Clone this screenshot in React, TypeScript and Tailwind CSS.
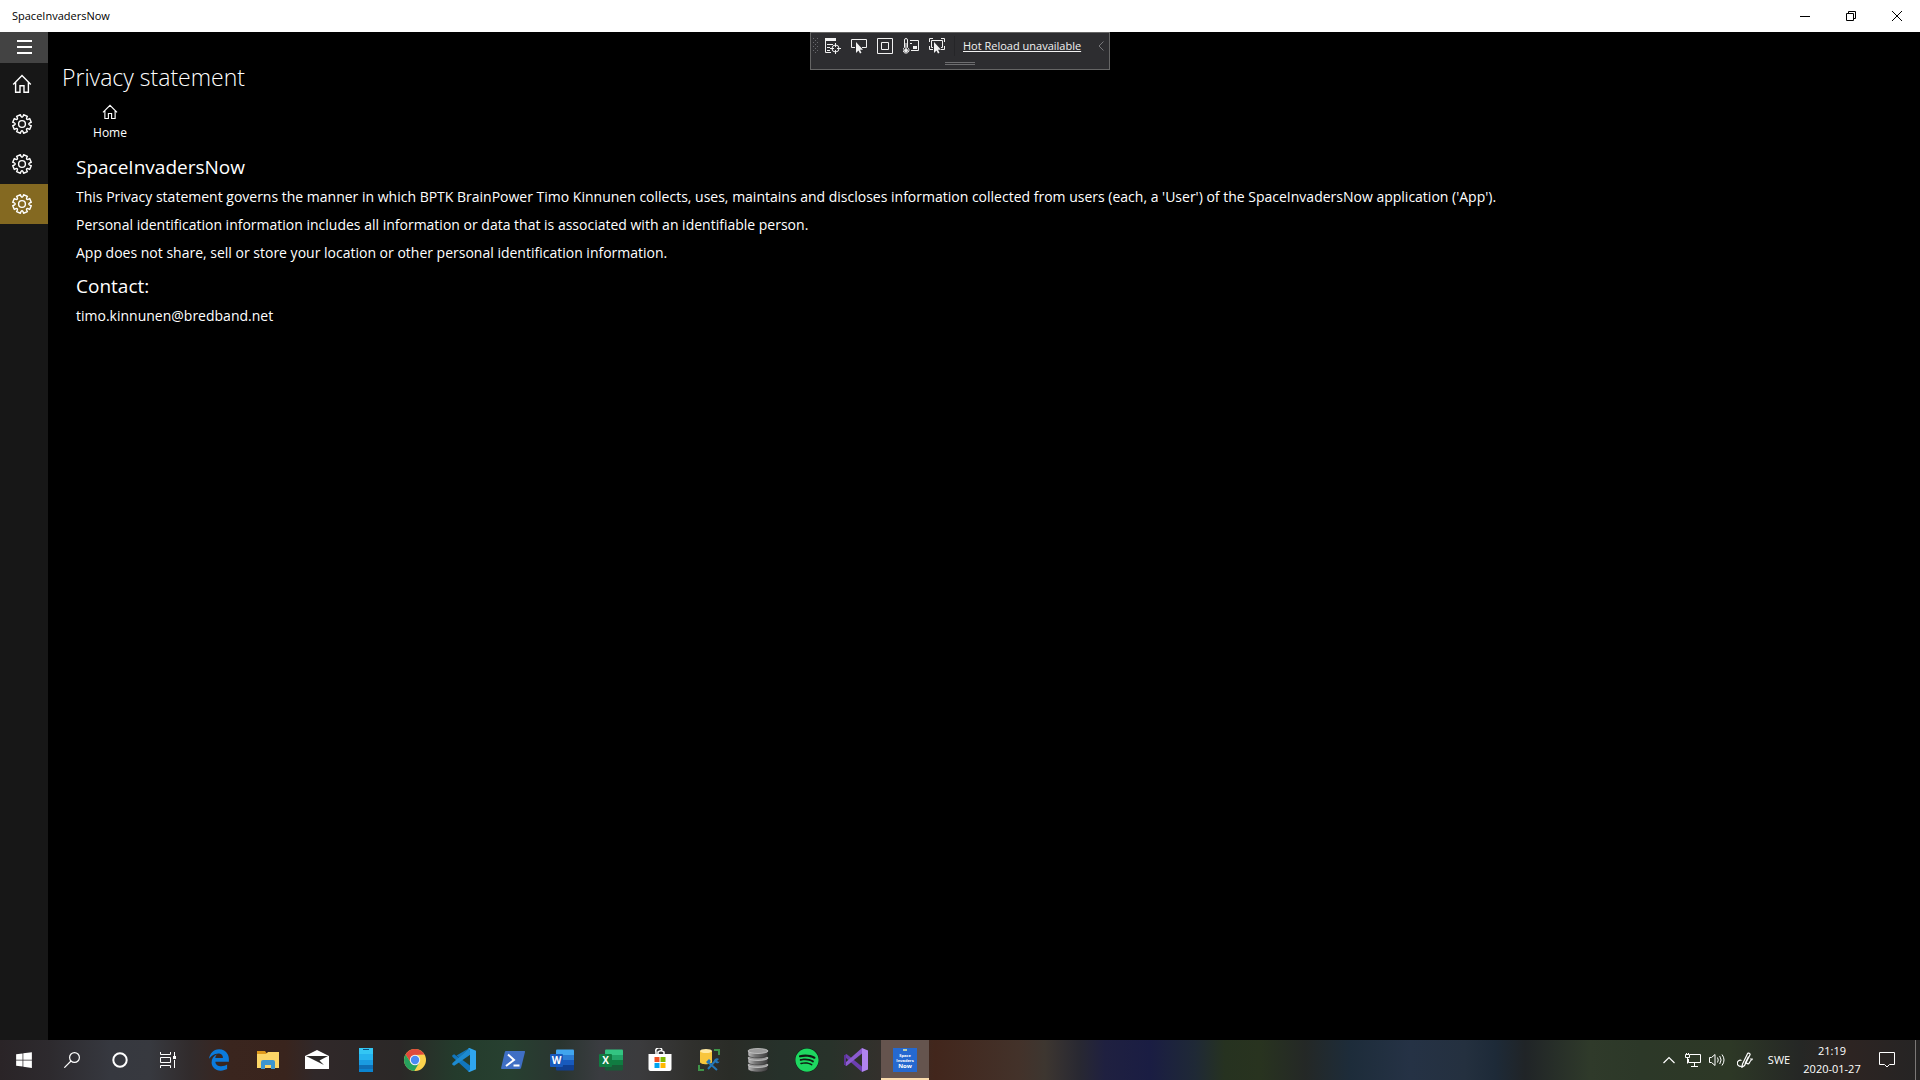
import type { ReactNode } from "react";
import { FaWindows, FaEdgeLegacy, FaSpotify } from "react-icons/fa6";

const line = { fill: "none", stroke: "currentColor" } as const;

function HomeIcon({ className }: { className: string }) {
  return (
    <svg viewBox="0 0 20 20" className={className} {...line} strokeWidth="1.4" aria-hidden="true">
      <path d="M1.2 10.4 10 1.6l8.800 8.800M3.600 8.400v9.800h4.400v-6.400h4v6.400h4.400V8.400" />
    </svg>
  );
}

function gearPath() {
  const pts: string[] = [];
  for (let i = 0; i < 8; i++) {
    const base = (i * Math.PI) / 4 + Math.PI / 8;
    const at = (r: number, o: number) =>
      `${(10 + r * Math.cos(base + o)).toFixed(2)} ${(10 + r * Math.sin(base + o)).toFixed(2)}`;
    pts.push(`${i ? "L" : "M"}${at(9.4, -0.22)}L${at(9.4, 0.22)}L${at(7.6, 0.26)}Q${at(6, 0.39)} ${at(7.6, 0.53)}`);
  }
  return pts.join("") + "Z";
}

function GearIcon() {
  return (
    <svg viewBox="0 0 20 20" className="size-5" {...line} strokeWidth="1.4" strokeLinejoin="round" aria-hidden="true">
      <path d={gearPath()} />
      <circle cx="10" cy="10" r="3.400" />
    </svg>
  );
}

function Svg({ children }: { children: ReactNode }) {
  return (
    <svg viewBox="0 0 24 24" className="size-6" aria-hidden="true">
      {children}
    </svg>
  );
}

function OfficeIcon({ letter, colors }: { letter: string; colors: string[] }) {
  return (
    <Svg>
      <path d="M6 2.500a1 1 0 0 1 1-1h16a1 1 0 0 1 1 1V7H6z" fill={colors[0]} />
      <path d="M6 7h18v5H6z" fill={colors[1]} />
      <path d="M6 12h18v5H6z" fill={colors[2]} />
      <path d="M6 17h18v4.500a1 1 0 0 1-1 1H7a1 1 0 0 1-1-1z" fill={colors[3]} />
      <rect x="0" y="6" width="13" height="13" rx="1" fill={colors[4]} />
      <text x="6.500" y="16" textAnchor="middle" fontSize="10" fontWeight="700" fill="#fff">
        {letter}
      </text>
    </Svg>
  );
}

const apps: { name: string; icon: ReactNode; active?: boolean }[] = [
  { name: "Microsoft Edge", icon: <FaEdgeLegacy className="size-[22px] text-[#0b7bdc]" /> },
  {
    name: "File Explorer",
    icon: (
      <Svg>
        <path d="M1 3h8l1.500 2H22v4H1z" fill="#e09a1c" />
        <path d="M1 6h9l2-2h11v16H1z" fill="#fdd667" />
        <path d="M5 21v-7a2 2 0 0 1 2-2h10a2 2 0 0 1 2 2v7h-4v-4H9v4z" fill="#3d95cf" />
      </Svg>
    ),
  },
  {
    name: "Mail",
    icon: (
      <Svg>
        <path d="M0 8 12 2l12 6v13H0z" fill="#fff" />
        <path d="M1 8h22l-8.500 4.500 4.500 4.500z" fill="#2b2827" />
      </Svg>
    ),
  },
  {
    name: "Your Phone",
    icon: (
      <Svg>
        <path d="M5 0h14v6H5z" fill="#33c6f4" />
        <path d="M5 6h14v6H5z" fill="#25b3ee" />
        <path d="M5 12h14v5H5z" fill="#1a9be0" />
        <path d="M5 17h14v4H5z" fill="#0f6fb5" />
        <path d="M5 21h14v3H5z" fill="#0b84d0" />
        <path d="M9 1h6v1H9z" fill="#0b4f80" />
      </Svg>
    ),
  },
  {
    name: "Google Chrome",
    icon: (
      <Svg>
        <circle cx="12" cy="12" r="11" fill="#fbd34d" />
        <path d="M2.500 6.500A11 11 0 0 1 21.500 6.500L12 7 7.700 14.500z" fill="#df4a3c" />
        <path d="M2.500 6.500A11 11 0 0 0 11.300 23l5-8.500-8.600 0z" fill="#27a15d" />
        <circle cx="12" cy="12" r="5.200" fill="#f4f4f4" />
        <circle cx="12" cy="12" r="4.200" fill="#4a8af4" />
      </Svg>
    ),
  },
  {
    name: "Visual Studio Code",
    icon: (
      <Svg>
        <path d="M17.500 0 6.800 9.800 2.200 6.300.3 7.300v1.500l16.200 14.700 1.500-.5v-5.600L4.500 7.500z" fill="#1176bd" />
        <path d="M.3 15.200 17.500 0l1 6.500L2.200 17.700.3 16.700z" fill="#1d8ad0" />
        <path d="M17.500 0 24 2.800v18.400L17.500 24l-1.500-.8 2-1.200V2L16 .8z" fill="#2fa5ee" />
      </Svg>
    ),
  },
  {
    name: "Windows PowerShell",
    icon: (
      <Svg>
        <path d="M5 3h18.200a.8.800 0 0 1 .8 1l-4 16a1.500 1.500 0 0 1-1.300 1H.9a.8.800 0 0 1-.8-1l3.700-16A1.500 1.500 0 0 1 5 3z" fill="#3f6fc4" />
        <path d="M7 6.500 13 12l-8 6M12.500 17.500h6" fill="none" stroke="#fff" strokeWidth="2" />
      </Svg>
    ),
  },
  { name: "Word", icon: <OfficeIcon letter="W" colors={["#41a5ee", "#2b7cd3", "#185abd", "#103f91", "#185abd"]} /> },
  { name: "Excel", icon: <OfficeIcon letter="X" colors={["#33c481", "#21a366", "#107c41", "#185c37", "#107c41"]} /> },
  {
    name: "Microsoft Store",
    icon: (
      <Svg>
        <path d="M8 6V4a3 3 0 0 1 6-2M10 6V4a4 4 0 0 1 6 0v2" fill="none" stroke="#fff" strokeWidth="1.500" />
        <path d="M.5 6h23v15a2 2 0 0 1-2 2h-19a2 2 0 0 1-2-2z" fill="#fff" />
        <path d="M6.500 9h5v5h-5z" fill="#f25022" />
        <path d="M12.500 9h5v5h-5z" fill="#7fba00" />
        <path d="M6.500 15h5v5h-5z" fill="#00a4ef" />
        <path d="M12.500 15h5v5h-5z" fill="#ffb900" />
      </Svg>
    ),
  },
  {
    name: "SQL Server Management Studio",
    icon: (
      <Svg>
        <path d="M3 3v11c0 3 12 3 12 0V3z" fill="#f8c63c" />
        <ellipse cx="9" cy="3" rx="6" ry="2" fill="#ffe9a0" />
        <path d="M17 2h5v5M2 17v5h5" fill="none" stroke="#3f9449" strokeWidth="2" />
        <path d="m11 14 9 8M19 12l-8 9" stroke="#2477b8" strokeWidth="2" />
        <path d="M17 13a3 3 0 0 1 5-2l-2 2 2 1 1-1a3 3 0 0 1-4 2zM9 14l3-3 2 2-3 3z" fill="#2477b8" />
      </Svg>
    ),
  },
  {
    name: "Database",
    icon: (
      <Svg>
        <defs>
          <linearGradient id="disk" x1="0" x2="1">
            <stop offset="0" stopColor="#bdbdbd" />
            <stop offset="0.35" stopColor="#777" />
            <stop offset="1" stopColor="#3c3c3c" />
          </linearGradient>
        </defs>
        {[16, 9, 2].map((y) => (
          <g key={y}>
            <path d={`M2 ${y + 1}v4c0 4 20 4 20 0v-4z`} fill="url(#disk)" stroke="#222" strokeWidth="0.500" />
            <ellipse cx="12" cy={y + 1} rx="10" ry="2.500" fill="#9b9b9b" stroke="#d2d2d2" strokeWidth="0.700" />
          </g>
        ))}
      </Svg>
    ),
  },
  {
    name: "Spotify",
    icon: (
      <span className="flex size-6 rounded-full bg-[#101a12]">
        <FaSpotify className="size-6 text-[#1ed760]" />
      </span>
    ),
  },
  {
    name: "Visual Studio",
    icon: (
      <Svg>
        <path d="M.3 7.500 2.500 6 18 18.500V24L.3 8.500z" fill="#6c3fb0" />
        <path d="M.3 16.500 2.500 18 18 5.500V0L.3 15.500z" fill="#8b5bd0" />
        <path d="M0 7.500 2 6.500v11L0 16.500z" fill="#5b3296" />
        <path d="M18 0l6 2.500v19L18 24z" fill="#b083ee" />
      </Svg>
    ),
  },
  {
    name: "SpaceInvadersNow",
    active: true,
    icon: (
      <span className="flex size-6 flex-col items-center bg-[#2569d0] text-[4px]/[5px] font-bold text-white">
        <span className="mt-px mb-[2px] h-[2px] w-1 bg-[#b9cdb0]" />
        <span>Space</span>
        <span>Invaders</span>
        <span className="text-[6px]/[7px]">Now</span>
      </span>
    ),
  },
];

const taskbarGradient =
  "bg-[linear-gradient(90deg,#2a2427_0px,#2d2a2e_50px,#36383f_110px,#37393f_150px,#312b2c_190px,#3a251e_230px,#39241d_285px,#302829_315px,#2b2827_400px,#243b2c_455px,#274030_510px,#2a3530_560px,#3a3c40_600px,#3b3b3d_640px,#30302d_690px,#2a2c27_730px,#26312a_780px,#28322a_830px,#33302c_880px,#42261c_935px,#43322a_1020px,#3d3630_1045px,#282832_1080px,#1f2040_1105px,#1a1d43_1150px,#1f2936_1195px,#263220_1225px,#28331f_1260px,#242826_1305px,#1d2c3a_1350px,#253245_1410px,#24303f_1465px,#1d2a38_1495px,#202427_1525px,#2f3a2a_1590px,#2c3828_1640px,#2d3826_1730px,#252725_1800px,#2d2422_1850px,#252424_1920px)]";

export default function App() {
  return (
    <div className="relative flex h-screen flex-col overflow-hidden bg-black font-['Open_Sans','Noto_Sans',sans-serif] text-white">
      <header className="flex h-8 shrink-0 items-center justify-between bg-white pl-3 text-black">
        <span className="text-[11px]/4">SpaceInvadersNow</span>
        <div className="flex h-full">
          <button aria-label="Minimize" className="flex w-[46px] items-center justify-center">
            <svg viewBox="0 0 10 10" className="size-[10px]" {...line} aria-hidden="true">
              <path d="M0 5.500h10" />
            </svg>
          </button>
          <button aria-label="Restore" className="flex w-[46px] items-center justify-center">
            <svg viewBox="0 0 10 10" className="size-[10px]" {...line} aria-hidden="true">
              <path d="M.5 2.500h7v7h-7zM2.500 2V.5h7v7H8" />
            </svg>
          </button>
          <button aria-label="Close" className="flex w-[46px] items-center justify-center">
            <svg viewBox="0 0 10 10" className="size-[10px]" {...line} aria-hidden="true">
              <path d="m0 0 10 10M10 0 0 10" />
            </svg>
          </button>
        </div>
      </header>

      <div className="flex min-h-0 flex-1">
        <nav className="flex w-12 shrink-0 flex-col bg-[#171717]" aria-label="Main">
          <button aria-label="Menu" className="flex h-[31px] items-start pt-2 pl-[17px] bg-[#434343]">
            <svg viewBox="0 0 15 14" className="h-[14px] w-[15px]" {...line} strokeWidth="2" aria-hidden="true">
              <path d="M0 1h15M0 7h15M0 13h15" />
            </svg>
          </button>
          <button aria-label="Home" className="mt-px flex h-10 items-center pl-3">
            <HomeIcon className="size-5" />
          </button>
          <button aria-label="Settings" className="flex h-10 items-center pl-3">
            <GearIcon />
          </button>
          <button aria-label="About" className="flex h-10 items-center pl-3">
            <GearIcon />
          </button>
          <button aria-label="Privacy statement" aria-current="page" className="flex h-10 items-center bg-[#846921] pl-3">
            <GearIcon />
          </button>
        </nav>

        <main className="min-w-0 flex-1 pt-7">
          <h1 className="pl-[14px] text-[23px]/[34px] font-light">Privacy statement</h1>
          <div className="pl-7">
            <button className="flex h-[54px] w-[68px] flex-col items-center pt-[10px]">
              <HomeIcon className="size-4" />
              <span className="mt-[5px] text-[12px]/4">Home</span>
            </button>
            <h2 className="mt-1 text-[19px]/[31px]">SpaceInvadersNow</h2>
            <p className="text-[14px]/7">
              This Privacy statement governs the manner in which BPTK BrainPower Timo Kinnunen collects, uses, maintains and discloses information collected from users (each, a 'User') of the SpaceInvadersNow application ('App').
            </p>
            <p className="text-[14px]/7">
              Personal identification information includes all information or data that is associated with an identifiable person.
            </p>
            <p className="text-[14px]/7">
              App does not share, sell or store your location or other personal identification information.
            </p>
            <h2 className="mt-1 text-[19px]/[31px]">Contact:</h2>
            <p className="text-[14px]/7">timo.kinnunen@bredband.net</p>
          </div>
        </main>
      </div>

      <div
        role="toolbar"
        aria-label="Debug"
        className="absolute top-8 left-1/2 flex h-[38px] w-[300px] -translate-x-1/2 flex-col items-center border border-[#656565] bg-[#2d2d30] text-[#f1f1f1]"
      >
        <div className="flex h-[26px] w-full items-center pr-[5px] pl-[2px]">
          <svg viewBox="0 0 6 16" className="mr-px h-4 w-[6px]" fill="#68686c" aria-hidden="true">
            {[0, 4, 8, 12].map((y) => (
              <path key={y} d={`M0 ${y}h1v1H0zM4 ${y}h1v1H4zM2 ${y + 2}h1v1H2z`} />
            ))}
          </svg>
          <button aria-label="Go to Live Visual Tree" className="flex w-[26px] justify-center">
            <svg viewBox="0 0 16 16" className="size-4" {...line} aria-hidden="true">
              <path d="M0 0h11v3H0z" fill="currentColor" stroke="none" />
              <path d="M.5 2v12.500H6M2 6.500h6M2 9.500h3M2 12.500h3M10.500 5v4M10.500 12v4M5 10.500h4M12 10.500h4" />
              <circle cx="10.500" cy="10.500" r="3.500" />
            </svg>
          </button>
          <button aria-label="Select Element" className="flex w-[26px] justify-center">
            <svg viewBox="0 0 16 16" className="size-4" {...line} aria-hidden="true">
              <path d="M4 9.500H.5v-8h15v8H11" />
              <path d="M5 4v11l2.500-2.500 1.500 3 1.500-.7-1.500-3H12z" fill="currentColor" stroke="none" />
            </svg>
          </button>
          <button aria-label="Display Layout Adorners" className="flex w-[26px] justify-center">
            <svg viewBox="0 0 16 16" className="size-4" {...line} aria-hidden="true">
              <path d="M.5.5h15v15H.5zM4.500 4.500h7v7h-7z" />
            </svg>
          </button>
          <button aria-label="Track Focused Element" className="flex w-[26px] justify-center">
            <svg viewBox="0 0 16 16" className="size-4" {...line} aria-hidden="true">
              <path d="M1.500 9.500V2a1.500 1.500 0 0 1 3 0v7.500a3 3 0 1 1-3 0zM3 5v7M7 2.500h8.500v10H8" />
              <circle cx="3" cy="12.500" r="1.500" fill="currentColor" />
              <path d="M10 8h4v3h-4zM7 5h2v1H7z" fill="currentColor" stroke="none" />
            </svg>
          </button>
          <button aria-label="Inspect Element" className="flex w-[26px] justify-center">
            <svg viewBox="0 0 16 16" className="size-4" {...line} aria-hidden="true">
              <path d="M.5 4V.5H4M12 .5h3.500V4M.5 8v3.500H4M12 11.500h3.500V8M4 9.500H2.500v-7h11v7H12" />
              <path d="M5 4v11l2.500-2.500 1.500 3 1.500-.7-1.500-3H12z" fill="currentColor" stroke="none" />
            </svg>
          </button>
          <span className="mx-1 h-5 w-px bg-[#252528]" />
          <a href="#hot-reload" className="ml-1 text-[11px]/4 whitespace-nowrap underline">
            Hot Reload unavailable
          </a>
          <button aria-label="Collapse" className="ml-auto text-[#77777a]">
            <svg viewBox="0 0 6 10" className="h-[10px] w-[6px]" {...line} aria-hidden="true">
              <path d="M5.500.5 1 5l4.500 4.500" />
            </svg>
          </button>
        </div>
        <span className="mt-[3px] h-[3px] w-[30px] border-y border-[#6e6e70]" />
      </div>

      <footer className={`flex h-10 shrink-0 items-stretch ${taskbarGradient}`}>
        <button aria-label="Start" className="flex w-12 items-center justify-center">
          <FaWindows className="size-[18px]" />
        </button>
        <button aria-label="Search" className="flex w-12 items-center justify-center">
          <svg viewBox="0 0 16 16" className="size-4" {...line} strokeWidth="1.200" aria-hidden="true">
            <circle cx="10.500" cy="5.500" r="4.900" />
            <path d="M7 9 .3 15.700" />
          </svg>
        </button>
        <button aria-label="Cortana" className="flex w-12 items-center justify-center">
          <svg viewBox="0 0 16 16" className="size-4" {...line} strokeWidth="2" aria-hidden="true">
            <circle cx="8" cy="8" r="6.700" />
          </svg>
        </button>
        <button aria-label="Task View" className="flex w-12 items-center justify-center">
          <svg viewBox="0 0 16 16" className="size-4" {...line} aria-hidden="true">
            <path d="M.5 0v2.500h10V0M.5 16v-2.500h10V16M.5 5.500h10v5H.5zM14.500 0v4M14.500 8v8" />
            <path d="M13 4h3v3h-3z" fill="currentColor" stroke="none" />
          </svg>
        </button>
        <div className="ml-[3px] flex gap-px">
          {apps.map((app) => (
            <button
              key={app.name}
              aria-label={app.name}
              className={
                app.active
                  ? "flex w-12 items-center justify-center border-b-2 border-[#fbdcae] bg-[#65544e] pt-[2px]"
                  : "flex w-12 items-center justify-center"
              }
            >
              {app.icon}
            </button>
          ))}
        </div>
        <div className="ml-auto flex">
          <button aria-label="Show hidden icons" className="flex w-6 items-center justify-center">
            <svg viewBox="0 0 12 8" className="h-2 w-3" {...line} strokeWidth="1.200" aria-hidden="true">
              <path d="m.5 7 5.500-5.500L11.500 7" />
            </svg>
          </button>
          <button aria-label="Network" className="flex w-6 items-center justify-center">
            <svg viewBox="0 0 16 16" className="size-4" {...line} aria-hidden="true">
              <path d="M5 2.500h10.500v8H3.500V7M9.500 11v3M6 14.500h7M.5 2.500h4v3h-4zM2.500 5.500v6M1.500 1v1M3.500 1v1" />
            </svg>
          </button>
          <button aria-label="Volume" className="flex w-6 items-center justify-center">
            <svg viewBox="0 0 16 16" className="size-4" {...line} aria-hidden="true">
              <path d="M.5 5.500h2L6 2.500v11l-3.500-3h-2zM8.500 5.500q1.500 2.500 0 5M10.700 4q2.800 4 0 8M13 2.500q4 5.500 0 11" />
            </svg>
          </button>
          <button aria-label="Windows Ink" className="flex w-8 items-center justify-center">
            <svg viewBox="0 0 16 16" className="size-4" {...line} strokeWidth="1.200" aria-hidden="true">
              <path d="M5.500 12 10.500 1.800a1.300 1.300 0 0 1 2.400 1.200L7.500 13.500 5 15.200zM4.500 8.500a3 3 0 1 0 0 5.500M8 11.500l3.500-7M9.500 11q2 2 3-.5t3-3M13 7h2.800" />
            </svg>
          </button>
          <button aria-label="Input language" className="w-9 text-center text-[11px]">
            SWE
          </button>
          <button className="flex w-[70px] flex-col items-center justify-center text-[11px]/[18px]">
            <span>21:19</span>
            <span>2020-01-27</span>
          </button>
          <button aria-label="Notifications" className="flex w-10 items-center justify-center">
            <svg viewBox="0 0 16 16" className="size-4" {...line} aria-hidden="true">
              <path d="M.5.5h15v12h-5L8 15l-2.500-2.500h-5z" />
            </svg>
          </button>
          <span className="mr-1 ml-2 w-px bg-[#7b7877]" />
        </div>
      </footer>
    </div>
  );
}
